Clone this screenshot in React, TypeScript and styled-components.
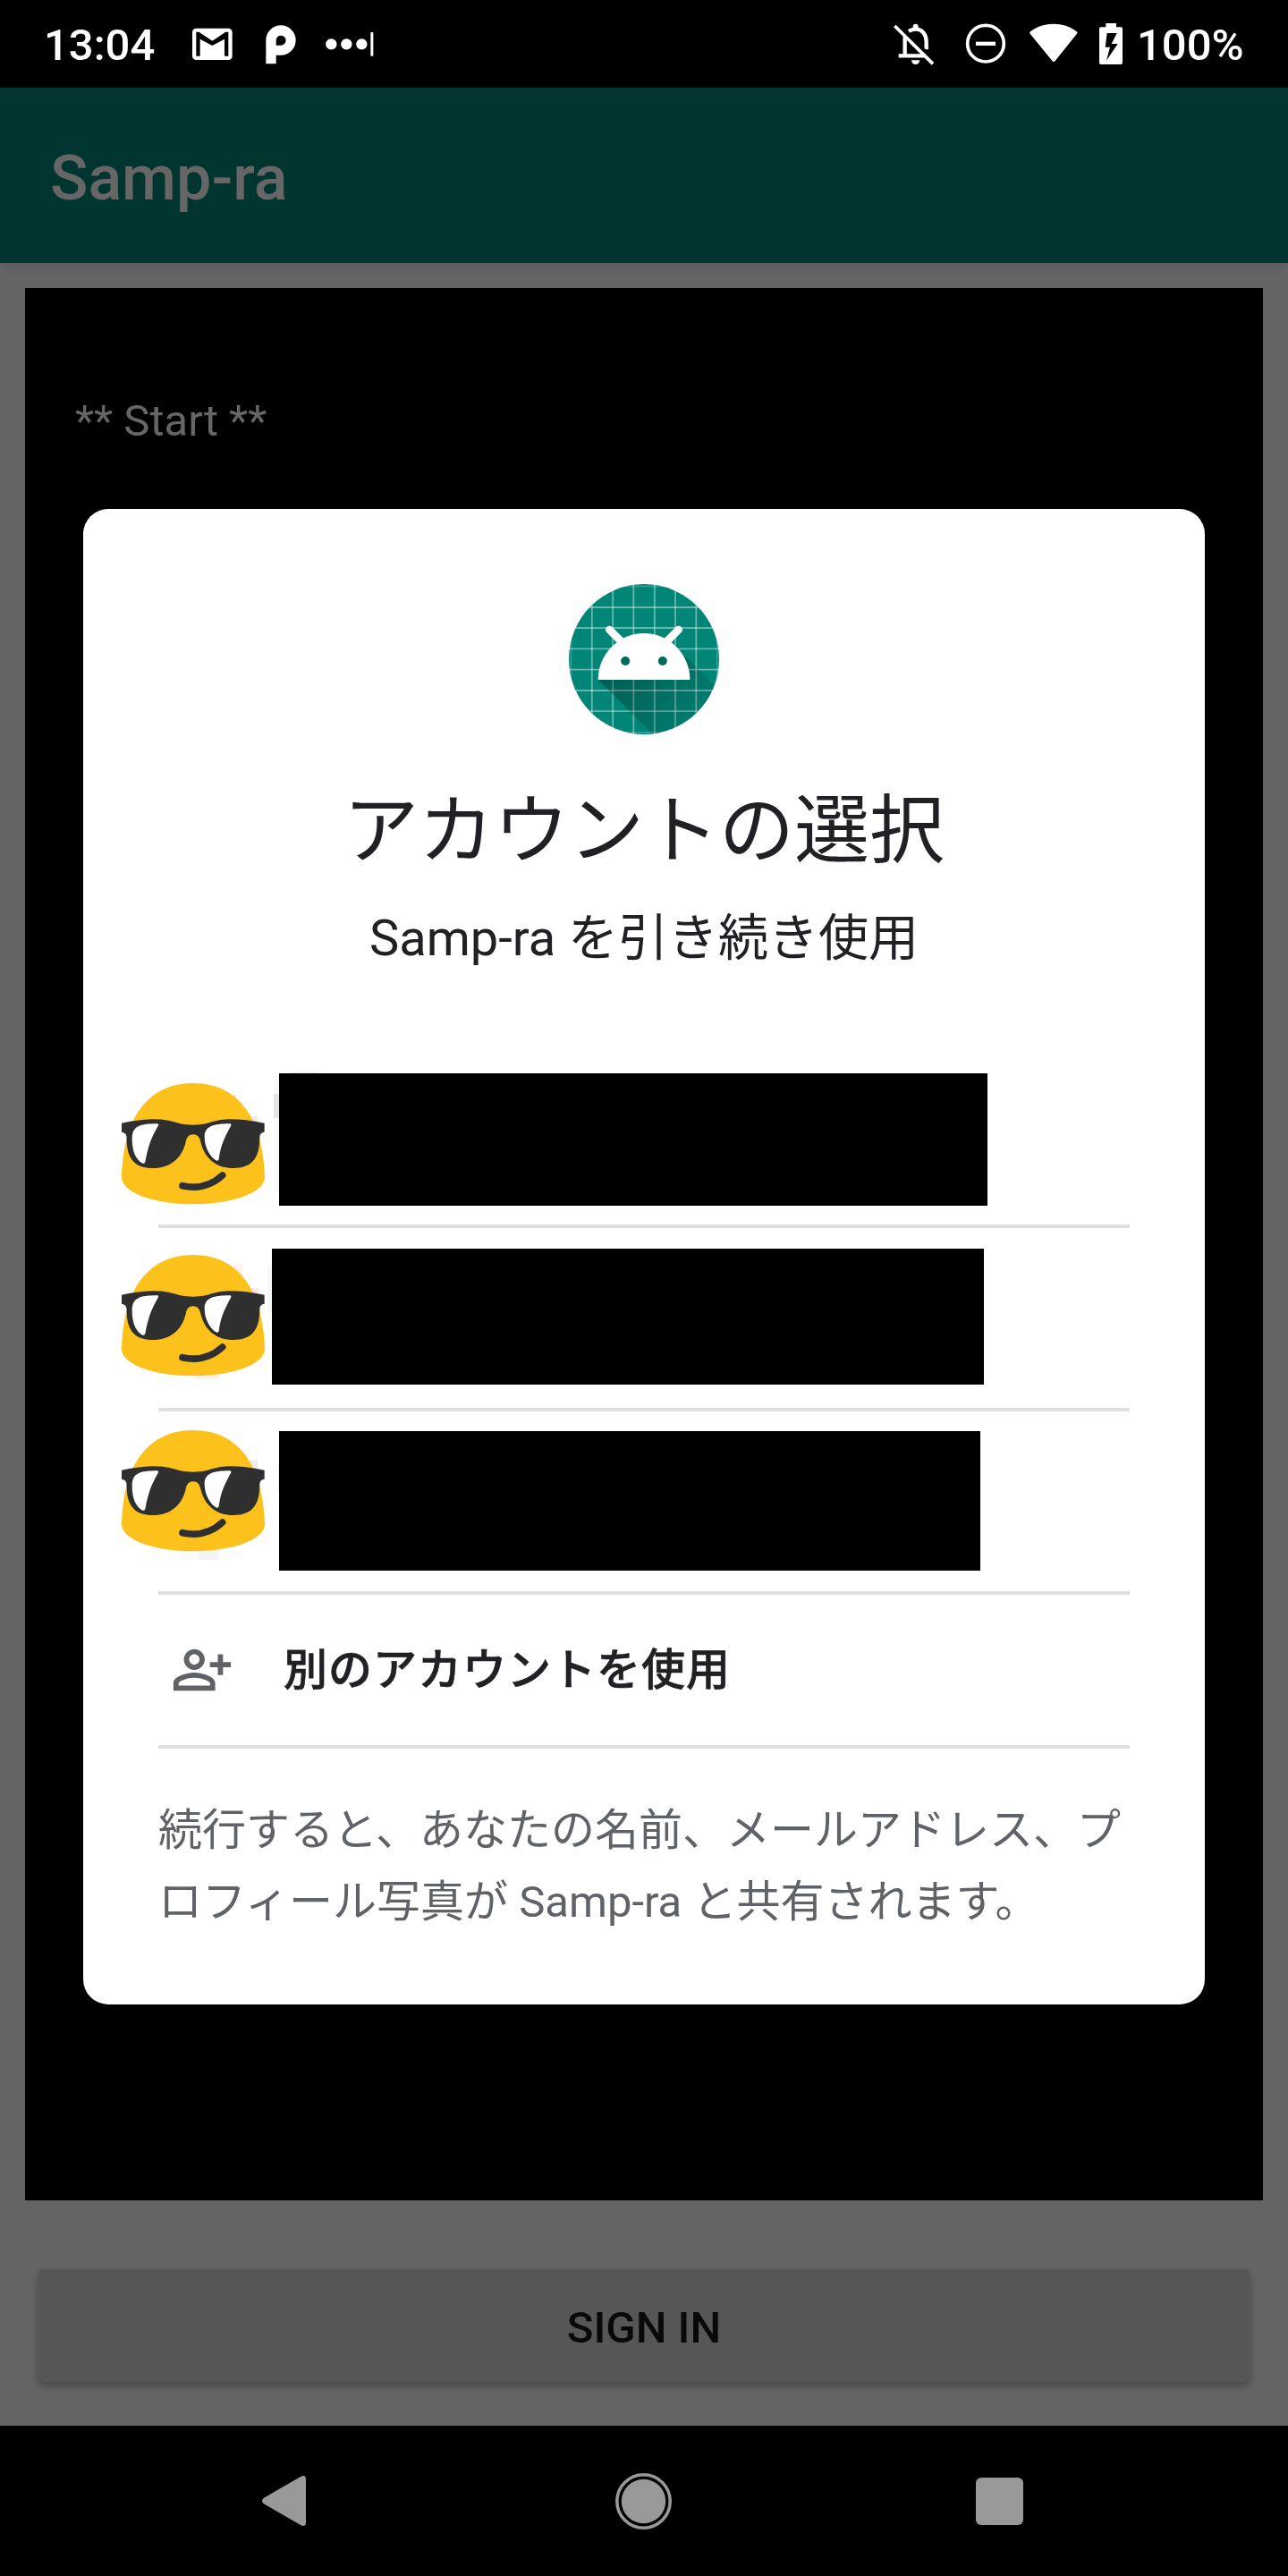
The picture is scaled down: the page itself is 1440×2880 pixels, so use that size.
import React from 'react';
import styled, { createGlobalStyle } from 'styled-components';

const GlobalStyle = createGlobalStyle`
  * { box-sizing: border-box; }
  body {
    margin: 0;
    background: #000;
    font-family: Roboto, 'Noto Sans CJK JP', sans-serif;
  }
`;

const Screen = styled.div`
  position: relative;
  width: 1440px;
  height: 2880px;
  display: flex;
  flex-direction: column;
  overflow: hidden;
  background: #646464;
`;

const StatusBar = styled.header`
  height: 98px;
  flex: none;
  display: flex;
  align-items: flex-start;
  justify-content: space-between;
  padding: 0 49px;
  background: #000;
  color: #fff;
`;

const StatusGroup = styled.div`
  display: flex;
  align-items: flex-start;
`;

const StatusText = styled.span<{ $width: number; $left?: number }>`
  width: ${(p) => p.$width}px;
  margin-left: ${(p) => p.$left ?? 0}px;
  padding-top: 2px;
  font-size: 49px;
  font-weight: 500;
  line-height: 98px;
  white-space: nowrap;
`;

const Glyph = styled.svg<{ $top: number; $left: number }>`
  display: block;
  flex: none;
  margin-top: ${(p) => p.$top}px;
  margin-left: ${(p) => p.$left}px;
`;

const AppBar = styled.div`
  height: 196px;
  flex: none;
  display: flex;
  align-items: center;
  padding: 6px 56px 0;
  background: #003530;
  box-shadow: 0 2px 12px rgba(0, 0, 0, 0.08);
`;

const AppTitle = styled.h1`
  margin: 0;
  color: #666;
  font-size: 70px;
  font-weight: 500;
  line-height: 82px;
`;

const Content = styled.main`
  flex: 1;
  display: flex;
  flex-direction: column;
  padding: 28px;
`;

const LogPanel = styled.section`
  height: 2138px;
  padding: 120px 56px;
  background: #000;
  color: #666;
  font-size: 49px;
  line-height: 58px;
`;

const SignInButton = styled.button`
  height: 126px;
  margin: 77px 14px 0;
  padding: 4px 0 0;
  border: 0;
  border-radius: 7px;
  background: #565656;
  box-shadow: 0 6px 9px rgba(0, 0, 0, 0.2), 0 1px 6px rgba(0, 0, 0, 0.08);
  color: #090909;
  font-family: inherit;
  font-size: 49px;
  font-weight: 500;
`;

const NavBar = styled.nav`
  height: 168px;
  flex: none;
  display: flex;
  align-items: center;
  padding-left: 293px;
  background: #000;
`;

const NavIcon = styled.svg<{ $left: number }>`
  display: block;
  flex: none;
  margin-left: ${(p) => p.$left}px;
`;

const Dialog = styled.section`
  position: absolute;
  top: 569px;
  left: 93px;
  width: 1254px;
  height: 1672px;
  padding-top: 84px;
  border-radius: 28px;
  background: #fff;
  color: #202124;
  display: flex;
  flex-direction: column;
`;

const Logo = styled.svg`
  display: block;
  flex: none;
  align-self: center;
`;

const DialogTitle = styled.h2`
  margin: 61px 0 0;
  font-size: 84px;
  font-weight: 400;
  line-height: 96px;
  text-align: center;
`;

const Subtitle = styled.p`
  margin: 31px 0 79px;
  font-size: 56px;
  line-height: 80px;
  text-align: center;
`;

const AccountRow = styled.div`
  height: 201px;
  flex: none;
  display: flex;
  align-items: flex-start;
  padding-left: 43px;
`;

const Avatar = styled.svg<{ $top: number }>`
  display: block;
  flex: none;
  overflow: visible;
  margin-top: ${(p) => p.$top}px;
`;

const Redaction = styled.div<{ $top: number; $left: number; $width: number; $height: number }>`
  margin: ${(p) => p.$top}px 0 0 ${(p) => p.$left}px;
  width: ${(p) => p.$width}px;
  height: ${(p) => p.$height}px;
  background: #000;
  z-index: 1;
`;

const Divider = styled.hr`
  flex: none;
  height: 4px;
  width: 1086px;
  margin: 0 84px;
  border: 0;
  background: #e0e0e0;
`;

const AddRow = styled.div`
  height: 168px;
  flex: none;
  display: flex;
  align-items: center;
  gap: 56px;
  padding-left: 98px;
`;

const AddLabel = styled.span`
  padding-bottom: 10px;
  font-size: 49px;
  font-weight: 500;
  letter-spacing: 1px;
  -webkit-text-stroke: 0.6px currentColor;
`;

const Notice = styled.p`
  margin: 52px 84px 0;
  color: #5f6368;
  font-size: 49px;
  line-height: 80px;
  white-space: nowrap;
`;

type Smudge = { x: number; y: number; w: number; h: number; color: string };

type Account = {
  avatarTop: number;
  boxTop: number;
  boxLeft: number;
  boxWidth: number;
  boxHeight: number;
  smudges: Smudge[];
};

const accounts: Account[] = [
  {
    avatarTop: 43, boxTop: 32, boxLeft: 16, boxWidth: 792, boxHeight: 148,
    smudges: [
      { x: 500, y: 132, w: 52, h: 40, color: '#ececee' },
      { x: 570, y: 204, w: 54, h: 40, color: '#ececee' },
      { x: 678, y: 69, w: 18, h: 387, color: '#f9f9f9' },
      { x: 678, y: 128, w: 18, h: 82, color: '#e6e6e6' },
      { x: 738, y: 54, w: 81, h: 6, color: '#f6f6f6' },
    ],
  },
  {
    avatarTop: 30, boxTop: 23, boxLeft: 8, boxWidth: 796, boxHeight: 152,
    smudges: [
      { x: 229, y: 87, w: 20, h: 423, color: '#fbfdfc' },
      { x: 500, y: 123, w: 75, h: 60, color: '#fef2f2' },
      { x: 570, y: 204, w: 57, h: 40, color: '#fdeaea' },
      { x: 657, y: 127, w: 15, h: 155, color: '#f6f8f7' },
      { x: 414, y: 470, w: 80, h: 40, color: '#fdf1f0' },
    ],
  },
  {
    avatarTop: 21, boxTop: 22, boxLeft: 16, boxWidth: 784, boxHeight: 156,
    smudges: [
      { x: 540, y: 163, w: 57, h: 40, color: '#fafafa' },
      { x: 570, y: 193, w: 54, h: 40, color: '#ececec' },
      { x: 692, y: 208, w: 4, h: 86, color: '#eeeeee' },
      { x: 360, y: 480, w: 66, h: 48, color: '#fbfbfb' },
      { x: 426, y: 480, w: 66, h: 48, color: '#f4f4f4' },
    ],
  },
];

function CoolBlob({ top, smudges }: { top: number; smudges: Smudge[] }) {
  return (
    <Avatar $top={top} width="160" height="136" viewBox="168 93 480 408">
      {smudges.map((s, i) => (
        <rect key={i} x={s.x} y={s.y} width={s.w} height={s.h} fill={s.color} />
      ))}
      <path
        fill="#fcc21b"
        d="M407 93C505 93 570 140 610 222C632 268 647 345 648 408C648 460 540 499 407 499C275 499 168 460 168 408C169 345 182 268 205 222C245 140 310 93 407 93Z"
      />
      <path
        fill="#2f2f2f"
        d="M168 227C215 217 255 214 280 214C345 215 350 233 408 233C465 233 470 215 530 214C565 214 605 218 647 227V257C632 259 631 268 631 280C630 350 600 378 543 378C480 378 445 340 433 290C430 275 422 265 408 265C393 265 386 275 383 290C371 345 330 378 273 378C215 378 186 350 185 285C185 268 184 260 168 257Z"
      />
      <path
        fill="#fff"
        d="M288 229C228 229 203 237 203 280C203 330 220 352 238 362Q245 364 247 357C258 300 268 275 290 237Q293 229 288 229Z"
      />
      <path
        fill="#fff"
        d="M532 229C480 229 446 236 446 272C446 310 465 341 487 353Q492 355 494 348C500 305 510 280 534 237Q537 229 532 229Z"
      />
      <path fill="none" stroke="#2f2f2f" strokeWidth="23" strokeLinecap="round" d="M372 437Q450 454 506 402" />
    </Avatar>
  );
}

function AndroidLogo() {
  const cols = [115, 185.5, 255.5, 325, 395.5, 465, 535, 605];
  const rows = [106, 177, 246, 316, 386, 456, 525.5, 597];
  return (
    <Logo width="168" height="168" viewBox="108 99 504 504">
      <defs>
        <clipPath id="disc"><circle cx="360" cy="351" r="252" /></clipPath>
        <linearGradient id="cast" gradientUnits="userSpaceOnUse" x1="250" y1="380" x2="520" y2="620">
          <stop offset="0" stopColor="#000" stopOpacity="0.3" />
          <stop offset="1" stopColor="#000" stopOpacity="0.05" />
        </linearGradient>
      </defs>
      <g clipPath="url(#disc)">
        <rect x="108" y="99" width="504" height="504" fill="#008577" />
        <g stroke="#fff" strokeWidth="5.5">
          {cols.map((x, i) => (
            <line key={x} x1={x} x2={x} y1="99" y2="603" strokeOpacity={i === 0 || i === 7 ? 0.2 : 0.4} />
          ))}
          {rows.map((y, i) => (
            <line key={y} y1={y} y2={y} x1="108" x2="612" strokeOpacity={i === 0 || i === 7 ? 0.2 : 0.4} />
          ))}
        </g>
        <path fill="url(#cast)" d="M206 420L390 604H612V455L500 343Z" />
      </g>
      <path fill="#fff" d="M206 420C206 334 275 264 360 264S514 334 514 420Z" />
      <path stroke="#fff" strokeWidth="26" strokeLinecap="round" d="M244 252L288 296M476 252L432 296" />
      <circle cx="297.500" cy="357" r="15" fill="#00695e" />
      <circle cx="422.500" cy="357" r="15" fill="#00695e" />
    </Logo>
  );
}

export default function App() {
  return (
    <>
      <GlobalStyle />
      <Screen>
        <StatusBar>
          <StatusGroup>
            <StatusText $width={166}>13:04</StatusText>
            <Glyph $top={31} $left={0} width="46" height="37" viewBox="645 93 138 111">
              <rect x="645" y="95" width="134" height="106" rx="13" fill="#fff" />
              <path d="M658 107H667L712 137L757 107H766V188H753V131L712 153L671 131V188H658Z" fill="#000" />
            </Glyph>
            <Glyph $top={28} $left={36} width="34" height="44" viewBox="892 84 102 132">
              <path
                fill="#fff"
                fillRule="evenodd"
                d="M893 214V135A50 50 0 1 1 943 185H927V214ZM927 152V134.500A16.500 16.500 0 1 1 943.500 152Z"
              />
            </Glyph>
            <Glyph $top={36} $left={33} width="54" height="27" viewBox="1094 108 162 81">
              <circle cx="1113" cy="148" r="18.500" fill="#fff" />
              <circle cx="1164" cy="148" r="18.500" fill="#fff" />
              <circle cx="1215" cy="148" r="18.500" fill="#fff" />
              <rect x="1245" y="108" width="9" height="80" rx="3" fill="#fff" />
            </Glyph>
          </StatusGroup>
          <StatusGroup>
            <Glyph $top={26} $left={0} width="46" height="47" viewBox="114 78 138 141">
              <g fill="none" stroke="#fff" strokeWidth="13">
                <path d="M152 122V187M131 187H222" />
                <path d="M165 105C176 98 180 98 188 98C212 98 224 118 224 140V166" />
              </g>
              <path d="M179 97V89a9 9 0 0 1 18 0V97ZM174 202H202A14 14 0 0 1 174 202Z" fill="#fff" />
              <path d="M124 76L256 206" stroke="#000" strokeWidth="9" />
              <path d="M118 87L246 214" stroke="#fff" strokeWidth="11" />
            </Glyph>
            <Glyph $top={26} $left={34} width="46" height="46" viewBox="357 78 138 138">
              <circle cx="426" cy="146" r="61" fill="none" stroke="#fff" strokeWidth="11" />
              <path d="M393 146.500H459" stroke="#fff" strokeWidth="13" />
            </Glyph>
            <Glyph $top={26} $left={26} width="54" height="44" viewBox="572 78 162 132">
              <path d="M575 106C620 72 686 72 730 106Q734 109 731 113L658 204Q653 210 648 204L574 113Q571 109 575 106Z" fill="#fff" />
            </Glyph>
            <Glyph $top={26} $left={24} width="26" height="46" viewBox="807 78 78 138">
              <path d="M829 78H864V91H880Q885 91 885 96V211Q885 216 880 216H812Q807 216 807 211V96Q807 91 812 91H829Z" fill="#fff" />
              <path d="M833 111H866L848 147H869L831 203L843 158H827Z" fill="#000" />
            </Glyph>
            <StatusText $width={120} $left={16}>100%</StatusText>
          </StatusGroup>
        </StatusBar>

        <AppBar>
          <AppTitle>Samp-ra</AppTitle>
        </AppBar>

        <Content>
          <LogPanel>** Start **</LogPanel>
          <SignInButton>SIGN IN</SignInButton>
        </Content>

        <NavBar>
          <NavIcon $left={0} width="49" height="56" viewBox="0 0 49 56">
            <path d="M1.500 25L43 1Q49 -2 49 4V52Q49 58 43 55L1.500 31Q-1.500 28 1.500 25Z" fill="#999" />
          </NavIcon>
          <NavIcon $left={346} width="63" height="63" viewBox="0 0 63 63">
            <circle cx="31.500" cy="31.500" r="29.700" fill="none" stroke="#999" strokeWidth="3.500" />
            <circle cx="31.500" cy="31.500" r="24.700" fill="#999" />
          </NavIcon>
          <NavIcon $left={340} width="53" height="53" viewBox="0 0 53 53">
            <rect width="53" height="53" rx="6" fill="#999" />
          </NavIcon>
        </NavBar>

        <Dialog>
          <AndroidLogo />
          <DialogTitle>アカウントの選択</DialogTitle>
          <Subtitle>Samp-ra を引き続き使用</Subtitle>
          {accounts.map((a, i) => (
            <React.Fragment key={i}>
              <AccountRow>
                <CoolBlob top={a.avatarTop} smudges={a.smudges} />
                <Redaction $top={a.boxTop} $left={a.boxLeft} $width={a.boxWidth} $height={a.boxHeight} />
              </AccountRow>
              <Divider />
            </React.Fragment>
          ))}
          <AddRow>
            <svg width="70" height="70" viewBox="0 0 24 24" fill="#5f6368">
              <path d="M13 8c0-2.210-1.790-4-4-4S5 5.790 5 8s1.790 4 4 4 4-1.790 4-4zm-2 0c0 1.100-.9 2-2 2s-2-.9-2-2 .9-2 2-2 2 .9 2 2zM9 13c-2.670 0-8 1.340-8 4v3h16v-3c0-2.660-5.330-4-8-4zm6 5H3v-.990C3.200 16.290 6.300 15 9 15s5.800 1.290 6 2v1zM20 14v-3h3V9h-3V6h-2v3h-3v2h3v3z" />
            </svg>
            <AddLabel>別のアカウントを使用</AddLabel>
          </AddRow>
          <Divider />
          <Notice>
            続行すると、あなたの名前、メールアドレス、プ
            <br />
            ロフィール写真が Samp-ra と共有されます。
          </Notice>
        </Dialog>
      </Screen>
    </>
  );
}
